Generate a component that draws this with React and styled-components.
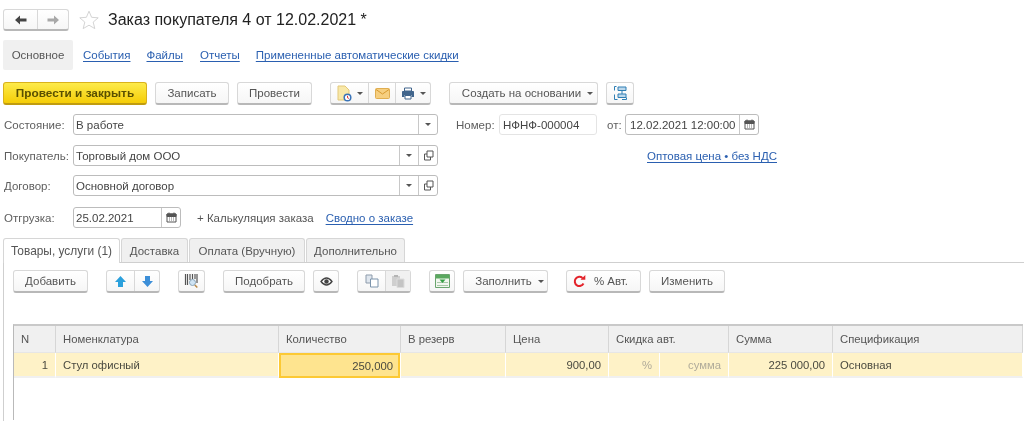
import React from "react";
import styled, { createGlobalStyle, css } from "styled-components";

const GlobalStyle = createGlobalStyle`
  html, body {
    margin: 0;
    padding: 0;
    background: #fff;
  }
  body {
    font-family: "Liberation Sans", Arial, sans-serif;
    font-size: 11.5px;
    color: #555;
  }
  * {
    box-sizing: border-box;
  }
`;

const Page = styled.div`
  width: 1024px;
  height: 431px;
  overflow: hidden;
  padding: 9px 0 0 3px;
  filter: blur(0.45px);
`;

const Header = styled.div`
  display: flex;
  align-items: stretch;
  height: 22px;
`;

const Title = styled.h1`
  margin: 0 0 0 9px;
  font-size: 16px;
  line-height: 22px;
  font-weight: 400;
  color: #222;
  white-space: nowrap;
`;

const StarBox = styled.span`
  display: flex;
  align-items: center;
  margin-left: 10px;
`;

const SectionNav = styled.nav`
  display: flex;
  align-items: center;
  height: 30px;
  margin-top: 9px;
`;

const ActiveSection = styled.span`
  display: flex;
  align-items: center;
  justify-content: center;
  width: 70px;
  height: 30px;
  margin-right: 10px;
  background: #f0f0f0;
  border-radius: 2px;
`;

const Link = styled.a`
  color: #2a5fb0;
  text-decoration: underline;
  text-decoration-skip-ink: none;
  text-underline-offset: 2px;
  text-decoration-thickness: 1px;
  white-space: nowrap;
  margin-left: ${(p) => p.$gap || 0}px;
`;

const Toolbar = styled.div`
  display: flex;
  align-items: stretch;
  height: 23px;
  margin-top: ${(p) => p.$top || 0}px;
`;

const buttonBase = css`
  display: flex;
  align-items: center;
  justify-content: center;
  gap: ${(p) => p.$inner || 6}px;
  padding: 0 ${(p) => p.$padRight || 0}px 0 ${(p) => p.$padLeft || 0}px;
  font: inherit;
  color: #555;
  background: linear-gradient(#ffffff, #f6f6f6);
  border: 1px solid #d8d8d8;
  border-bottom: 2px solid #b8b8b8;
  border-radius: 3px;
  white-space: nowrap;
`;

const Button = styled.button`
  ${buttonBase}
  width: ${(p) => p.$w}px;
  margin-left: ${(p) => p.$gap || 0}px;
`;

const PrimaryButton = styled.button`
  ${buttonBase}
  width: ${(p) => p.$w}px;
  font-size: 11.8px;
  font-weight: 700;
  color: #5a5000;
  background: linear-gradient(#fdeb4a, #f5cd07);
  border-color: #d9b21b;
  border-bottom-color: #c09c10;
`;

const ButtonGroup = styled.div`
  display: flex;
  margin-left: ${(p) => p.$gap || 0}px;
  border: 1px solid #d8d8d8;
  border-bottom: 2px solid #b8b8b8;
  border-radius: 3px;
  background: linear-gradient(#ffffff, #f6f6f6);
`;

const GroupItem = styled.span`
  display: flex;
  align-items: center;
  justify-content: center;
  gap: 5px;
  width: ${(p) => p.$w}px;
  background: ${(p) => (p.$muted ? "#f1f1f1" : "transparent")};
  & + & {
    border-left: 1px solid #d8d8d8;
  }
`;

const Caret = styled.i`
  display: inline-block;
  width: 0;
  height: 0;
  border-left: 3px solid transparent;
  border-right: 3px solid transparent;
  border-top: 3px solid #555;
`;

const Form = styled.div`
  margin-top: 9px;
`;

const FormRow = styled.div`
  display: flex;
  align-items: center;
  height: 21px;
  margin-top: ${(p) => p.$top || 0}px;
  padding-left: 1px;
`;

const Label = styled.span`
  width: ${(p) => p.$w || 69}px;
  margin-left: ${(p) => p.$gap || 0}px;
  color: #5e5e5e;
  white-space: nowrap;
  flex: none;
`;

const Field = styled.div`
  display: flex;
  align-items: stretch;
  width: ${(p) => p.$w}px;
  height: 21px;
  border: 1px solid #bcbcbc;
  border-radius: 3px;
  background: #fff;
  flex: none;
  ${(p) =>
    p.$soft &&
    css`
      border-color: #e4e4e4;
    `}
`;

const FieldText = styled.span`
  flex: 1;
  display: flex;
  align-items: center;
  padding-left: ${(p) => p.$pad || 2}px;
  color: #444;
  white-space: nowrap;
`;

const FieldButton = styled.span`
  display: flex;
  align-items: center;
  justify-content: center;
  width: ${(p) => p.$w || 19}px;
  border-left: 1px solid #c8c8c8;
`;

const PlainText = styled.span`
  margin-left: ${(p) => p.$gap || 0}px;
  white-space: nowrap;
`;

const Tabs = styled.div`
  display: flex;
  height: 25px;
  margin-top: 10px;
  border-bottom: 1px solid #cfcfcf;
`;

const Tab = styled.div`
  display: flex;
  align-items: center;
  justify-content: center;
  width: ${(p) => p.$w}px;
  height: ${(p) => (p.$active ? 25 : 24)}px;
  margin-right: 1px;
  font-size: ${(p) => (p.$active ? 11.9 : 11.5)}px;
  background: ${(p) => (p.$active ? "#fff" : "#f0f0f0")};
  border: 1px solid #d6d6d6;
  border-bottom: none;
  border-radius: 3px 3px 0 0;
  white-space: nowrap;
`;

const TabBody = styled.div`
  height: 158px;
  padding: 7px 0 0 9px;
  border-left: 1px solid #cfcfcf;
`;

const Table = styled.div`
  width: 1010px;
  height: 96px;
  margin-top: 31px;
  font-size: 11.3px;
  border-top: 2px solid #c9c9c9;
  border-left: 1px solid #b9b9b9;
`;

const TableRow = styled.div`
  display: grid;
  grid-template-columns: 42px 223px 122px 105px 103px 51px 69px 104px 190px;
  height: ${(p) => p.$h}px;
`;

const HeadCell = styled.div`
  display: flex;
  align-items: center;
  padding-left: 7px;
  background: #f0f0f0;
  border-right: 1px solid #d6d6d6;
  border-bottom: 1px solid #e6e6e6;
  grid-column: span ${(p) => p.$span || 1};
`;

const Cell = styled.div`
  display: flex;
  align-items: center;
  justify-content: ${(p) => (p.$right ? "flex-end" : "flex-start")};
  padding: 0 7px;
  background: #fef2c7;
  border-right: 1px solid #fff;
  border-bottom: 2px solid #f0f0f0;
  white-space: nowrap;
  color: ${(p) => (p.$dim ? "#b0ab9a" : "#4a4a40")};
`;

const ActiveCell = styled(Cell)`
  margin-right: 1px;
  background: #fee48f;
  border: 2px solid #fcc934;
  padding: 0 5px;
`;

const ArrowIcon = ({ dir, color }) => (
  <svg width="13" height="10" viewBox="0 0 13 10">
    <path
      d={dir === "left" ? "M1 5l5-4.500V3.500h6.500v3H6v3z" : "M12 5L7 .5V3.500H.5v3H7v3z"}
      fill={color}
    />
  </svg>
);

const StarIcon = () => (
  <svg width="20" height="20" viewBox="0 0 20 20">
    <path
      d="M10 1.2l2.6 6.1 6.6.5-5 4.3 1.600 6.500L10 15.200l-5.800 3.400 1.600-6.500-5-4.300 6.600-.5z"
      fill="#fff"
      stroke="#cfcfcf"
      strokeWidth="0.9"
    />
  </svg>
);

const CalendarIcon = () => (
  <svg width="11" height="11" viewBox="0 0 11 11">
    <path d="M1 2h9v8H1z" fill="#fff" stroke="#555" />
    <path d="M1 2h9v2.500H1zM3 .5v2M8 .5v2" fill="#555" stroke="#555" />
    <path d="M3 6h1M5 6h1M7 6h1M3 8h1M5 8h1M7 8h1" stroke="#777" />
  </svg>
);

const OpenIcon = () => (
  <svg width="11" height="11" viewBox="0 0 11 11">
    <path d="M4 1h6v6H4z" fill="none" stroke="#555" />
    <path d="M4 4H1.500v6h6V7" fill="none" stroke="#555" />
  </svg>
);

const ReportIcon = () => (
  <svg width="15" height="17" viewBox="0 0 15 17">
    <path d="M1 1h7l4 4v10H1z" fill="#f8e8a8" stroke="#e3c878" />
    <circle cx="10.500" cy="12.500" r="3.300" fill="#fff" stroke="#3a74b8" strokeWidth="1.500" />
    <path d="M10.500 10.800v2l1.400.6" fill="none" stroke="#d33" />
  </svg>
);

const MailIcon = () => (
  <svg width="15" height="11" viewBox="0 0 15 11">
    <rect x=".5" y=".5" width="14" height="10" rx="1" fill="#f6cf80" stroke="#e0ae50" />
    <path d="M1 1.500 7.500 6l6.500-4.500" fill="none" stroke="#d79a30" />
  </svg>
);

const PrinterIcon = () => (
  <svg width="14" height="13" viewBox="0 0 14 13">
    <path d="M3.500 1h7v3h-7z" fill="#fff" stroke="#41658c" />
    <path d="M1 4.500Q1 4 2 4h10q1 0 1 .5V10h-2.500V8h-7v2H1z" fill="#41658c" />
    <path d="M4 8.500h6V12H4z" fill="#fff" stroke="#41658c" />
  </svg>
);

const StructureIcon = () => (
  <svg width="15" height="16" viewBox="0 0 15 16">
    <path d="M5 2h8v3.500H5zM5 9h8v3.500H5z" fill="#bcd8ec" stroke="#2f7fb5" />
    <path d="M3.500 1.500H1.500v4M1.500 9.500v5h3M13.500 12.500v2H9" fill="none" stroke="#2f7fb5" />
    <path d="M9 5.500V9" stroke="#2f7fb5" />
  </svg>
);

const BlockArrowIcon = ({ up }) => (
  <svg width="13" height="13" viewBox="0 0 13 13">
    <path
      d={up ? "M6.500 1 12 7H9v5H4V7H1z" : "M6.500 12 12 6H9V1H4v5H1z"}
      fill={up ? "#2ba0dc" : "#3d8fd8"}
    />
  </svg>
);

const BarcodeIcon = () => (
  <svg width="15" height="16" viewBox="0 0 15 16">
    <path d="M1.500 1v11M3.500 1v11M6 1v6M8.500 1v5M11 1v5M13 1v9" stroke="#555" strokeWidth="1.200" />
    <circle cx="8.500" cy="9.500" r="3" fill="#cfe4f4" stroke="#8aa5b8" />
    <path d="M10.800 12l2.500 2.500" stroke="#b98a4a" strokeWidth="1.600" />
  </svg>
);

const EyeIcon = () => (
  <svg width="13" height="9" viewBox="0 0 13 9">
    <path d="M1 4.500Q6.500-2.500 12 4.500 6.500 11.500 1 4.500z" fill="#fff" stroke="#444" strokeWidth="1.300" />
    <circle cx="6.500" cy="4.500" r="2.200" fill="#444" />
  </svg>
);

const CopyIcon = () => (
  <svg width="14" height="14" viewBox="0 0 14 14">
    <path d="M1 1h6v8H1z" fill="#dfe6ee" stroke="#8d9bab" />
    <path d="M5.500 5h7.500v8H5.500z" fill="#fff" stroke="#7d95ad" />
  </svg>
);

const PasteIcon = () => (
  <svg width="14" height="14" viewBox="0 0 14 14">
    <path d="M1 2h8v10H1z" fill="#cfcfcf" />
    <path d="M3 1h4v2H3z" fill="#b4b4b4" />
    <path d="M6 5h7v8.500H6z" fill="#c4c4c4" stroke="#dcdcdc" />
  </svg>
);

const FillIcon = () => (
  <svg width="15" height="14" viewBox="0 0 15 14">
    <path d="M.5.500h14v13H.5z" fill="#f2f7ef" stroke="#6aa56e" />
    <path d="M1 1h13v3.500H1z" fill="#5aa85f" />
    <path d="M2 8.500h11M2 11.500h11" stroke="#a8c8a8" />
    <path d="M4.500 5.500h6L7.500 9z" fill="#35a045" />
  </svg>
);

const RefreshIcon = () => (
  <svg width="13" height="13" viewBox="0 0 13 13">
    <path d="M10.500 8.500A4.600 4.600 0 1 1 9.500 3" fill="none" stroke="#e3232b" strokeWidth="2" />
    <path d="M7.500 4.800h4.800V0z" fill="#e3232b" />
  </svg>
);

export default function App() {
  return (
    <Page>
      <GlobalStyle />
      <Header>
        <ButtonGroup>
          <GroupItem $w={33}>
            <ArrowIcon dir="left" color="#444" />
          </GroupItem>
          <GroupItem $w={31}>
            <ArrowIcon dir="right" color="#a8a8a8" />
          </GroupItem>
        </ButtonGroup>
        <StarBox>
          <StarIcon />
        </StarBox>
        <Title>Заказ покупателя 4 от 12.02.2021 *</Title>
      </Header>

      <SectionNav>
        <ActiveSection>Основное</ActiveSection>
        <Link>События</Link>
        <Link $gap={16}>Файлы</Link>
        <Link $gap={17}>Отчеты</Link>
        <Link $gap={16}>Примененные автоматические скидки</Link>
      </SectionNav>

      <Toolbar $top={12}>
        <PrimaryButton $w={144}>Провести и закрыть</PrimaryButton>
        <Button $w={74} $gap={8}>Записать</Button>
        <Button $w={75} $gap={8}>Провести</Button>
        <ButtonGroup $gap={18}>
          <GroupItem $w={37}>
            <ReportIcon />
            <Caret />
          </GroupItem>
          <GroupItem $w={27}>
            <MailIcon />
          </GroupItem>
          <GroupItem $w={35}>
            <PrinterIcon />
            <Caret />
          </GroupItem>
        </ButtonGroup>
        <Button $w={149} $gap={18} $padLeft={8}>
          Создать на основании
          <Caret />
        </Button>
        <Button $w={28} $gap={8}>
          <StructureIcon />
        </Button>
      </Toolbar>

      <Form>
        <FormRow>
          <Label>Состояние:</Label>
          <Field $w={365}>
            <FieldText>В работе</FieldText>
            <FieldButton>
              <Caret />
            </FieldButton>
          </Field>
          <Label $w={43} $gap={18}>Номер:</Label>
          <Field $w={98} $soft>
            <FieldText $pad={3}>НФНФ-000004</FieldText>
          </Field>
          <Label $w={18} $gap={10}>от:</Label>
          <Field $w={134}>
            <FieldText $pad={4}>12.02.2021 12:00:00</FieldText>
            <FieldButton>
              <CalendarIcon />
            </FieldButton>
          </Field>
        </FormRow>
        <FormRow $top={10}>
          <Label>Покупатель:</Label>
          <Field $w={365}>
            <FieldText>Торговый дом ООО</FieldText>
            <FieldButton>
              <Caret />
            </FieldButton>
            <FieldButton>
              <OpenIcon />
            </FieldButton>
          </Field>
          <Link $gap={209}>Оптовая цена • без НДС</Link>
        </FormRow>
        <FormRow $top={9}>
          <Label>Договор:</Label>
          <Field $w={365}>
            <FieldText>Основной договор</FieldText>
            <FieldButton>
              <Caret />
            </FieldButton>
            <FieldButton>
              <OpenIcon />
            </FieldButton>
          </Field>
        </FormRow>
        <FormRow $top={11}>
          <Label>Отгрузка:</Label>
          <Field $w={108}>
            <FieldText>25.02.2021</FieldText>
            <FieldButton>
              <CalendarIcon />
            </FieldButton>
          </Field>
          <PlainText $gap={16}>+ Калькуляция заказа</PlainText>
          <Link $gap={12}>Сводно о заказе</Link>
        </FormRow>
      </Form>

      <Tabs>
        <Tab $w={117} $active>Товары, услуги (1)</Tab>
        <Tab $w={67}>Доставка</Tab>
        <Tab $w={116}>Оплата (Вручную)</Tab>
        <Tab $w={99}>Дополнительно</Tab>
      </Tabs>

      <TabBody>
        <Toolbar>
          <Button $w={75}>Добавить</Button>
          <ButtonGroup $gap={18}>
            <GroupItem $w={27}>
              <BlockArrowIcon up />
            </GroupItem>
            <GroupItem $w={25}>
              <BlockArrowIcon />
            </GroupItem>
          </ButtonGroup>
          <Button $w={27} $gap={18}>
            <BarcodeIcon />
          </Button>
          <Button $w={82} $gap={18}>Подобрать</Button>
          <Button $w={26} $gap={8}>
            <EyeIcon />
          </Button>
          <ButtonGroup $gap={18}>
            <GroupItem $w={27}>
              <CopyIcon />
            </GroupItem>
            <GroupItem $w={25} $muted>
              <PasteIcon />
            </GroupItem>
          </ButtonGroup>
          <Button $w={26} $gap={18}>
            <FillIcon />
          </Button>
          <Button $w={85} $gap={8} $padLeft={8}>
            Заполнить
            <Caret />
          </Button>
          <Button $w={75} $gap={18} $padRight={6} $inner={8}>
            <RefreshIcon />
            % Авт.
          </Button>
          <Button $w={76} $gap={8}>Изменить</Button>
        </Toolbar>

        <Table>
          <TableRow $h={27}>
            <HeadCell>N</HeadCell>
            <HeadCell>Номенклатура</HeadCell>
            <HeadCell>Количество</HeadCell>
            <HeadCell>В резерв</HeadCell>
            <HeadCell>Цена</HeadCell>
            <HeadCell $span={2}>Скидка авт.</HeadCell>
            <HeadCell>Сумма</HeadCell>
            <HeadCell>Спецификация</HeadCell>
          </TableRow>
          <TableRow $h={25}>
            <Cell $right>1</Cell>
            <Cell>Стул офисный</Cell>
            <ActiveCell $right>250,000</ActiveCell>
            <Cell />
            <Cell $right>900,00</Cell>
            <Cell $right $dim>%</Cell>
            <Cell $right $dim>сумма</Cell>
            <Cell $right>225 000,00</Cell>
            <Cell>Основная</Cell>
          </TableRow>
        </Table>
      </TabBody>
    </Page>
  );
}
